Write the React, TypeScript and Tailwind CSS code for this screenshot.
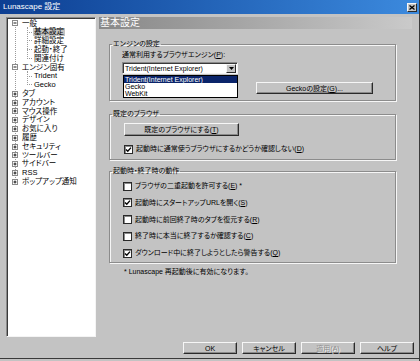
import React from "react";

type Node = { t: string; lvl: 0 | 1; box?: "minus" | "plus"; sel?: boolean };

const tree: Node[] = [
  { t: "一般", lvl: 0, box: "minus" },
  { t: "基本設定", lvl: 1, sel: true },
  { t: "詳細設定", lvl: 1 },
  { t: "起動・終了", lvl: 1 },
  { t: "関連付け", lvl: 1 },
  { t: "エンジン固有", lvl: 0, box: "minus" },
  { t: "Trident", lvl: 1 },
  { t: "Gecko", lvl: 1 },
  { t: "タブ", lvl: 0, box: "plus" },
  { t: "アカウント", lvl: 0, box: "plus" },
  { t: "マウス操作", lvl: 0, box: "plus" },
  { t: "デザイン", lvl: 0, box: "plus" },
  { t: "お気に入り", lvl: 0, box: "plus" },
  { t: "履歴", lvl: 0, box: "plus" },
  { t: "セキュリティ", lvl: 0, box: "plus" },
  { t: "ツールバー", lvl: 0, box: "plus" },
  { t: "サイドバー", lvl: 0, box: "plus" },
  { t: "RSS", lvl: 0, box: "plus" },
  { t: "ポップアップ通知", lvl: 0, box: "plus" },
];

function ExpBox({ kind }: { kind: "minus" | "plus" }) {
  return (
    <svg width="6" height="6" viewBox="0 0 6 6" className="shrink-0 relative">
      <rect x="0.5" y="0.5" width="5" height="5" fill="#fff" stroke="#8a8a8a" />
      <path d="M1.5 3 H4.5" stroke="#000" strokeWidth="0.9" />
      {kind === "plus" && <path d="M3 1.5 V4.5" stroke="#000" strokeWidth="0.9" />}
    </svg>
  );
}

function Check({ checked }: { checked?: boolean }) {
  return (
    <span className="w-[9px] h-[9px] shrink-0 bg-white border border-[#2a2a2a] shadow-[inset_1px_1px_0_#8a8a8a] flex items-center justify-center">
      {checked && (
        <svg width="7" height="7" viewBox="0 0 7 7">
          <path d="M1 3.4 L2.8 5.2 L6 1.6" stroke="#000" strokeWidth="1.4" fill="none" />
        </svg>
      )}
    </span>
  );
}

function Btn({ children, className, disabled }: { children: React.ReactNode; className?: string; disabled?: boolean }) {
  return (
    <div
      className={
        "flex items-center justify-center shrink-0 bg-[#c3c3c3] border border-t-[#f6f6f6] border-l-[#f6f6f6] border-r-[#2a2a2a] border-b-[#2a2a2a] shadow-[inset_-1px_-1px_0_#8a8a8a] text-[7px] leading-none " +
        (disabled ? "text-[#8e8e8e] [text-shadow:1px_1px_0_#f4f4f4] " : "text-black ") +
        (className ?? "")
      }
    >
      {children}
    </div>
  );
}

function Tree() {
  return (
    <div className="w-[90px] h-full shrink-0 bg-white border border-t-[#8a8a8a] border-l-[#8a8a8a] border-r-[#f4f4f4] border-b-[#f4f4f4] shadow-[inset_1px_1px_0_#3a3a3a]">
      <div className="relative pt-[1px] pl-[1px]">
        {/* root connector */}
        <div className="absolute left-[8px] top-[5.4px] h-[158.4px] border-l border-dotted border-[#9a9a9a]" />
        {/* children of 一般 */}
        <div className="absolute left-[20px] top-[9px] h-[31.6px] border-l border-dotted border-[#9a9a9a]" />
        {/* children of エンジン固有 */}
        <div className="absolute left-[20px] top-[53px] h-[13.6px] border-l border-dotted border-[#9a9a9a]" />
        {tree.map((n, i) => (
          <div key={i} className="h-[8.8px] flex items-center text-[7.5px] leading-none whitespace-nowrap relative">
            {n.lvl === 0 ? (
              <>
                <span className="ml-[4px]">
                  <ExpBox kind={n.box!} />
                </span>
                <span className="ml-[3px] w-[2px]" />
                <span className="ml-[-1px]">{n.t}</span>
              </>
            ) : (
              <>
                <span className="ml-[19px] w-[5px] border-t border-dotted border-[#9a9a9a]" />
                <span className={"ml-[1px] px-[1px] " + (n.sel ? "bg-[#c2c2c2]" : "")}>{n.t}</span>
              </>
            )}
          </div>
        ))}
      </div>
    </div>
  );
}

const fs =
  "ml-[10px] w-[287px] border border-[#8c8c8c] shadow-[1px_1px_0_#f6f6f6,inset_1px_1px_0_#f6f6f6] text-[7px] leading-[8px]";

function RightPane() {
  return (
    <div className="w-[313px] flex flex-col">
      <div className="h-[12px] shrink-0 bg-linear-to-r from-[#888888] to-[#cacaca] flex items-center pl-[1px]">
        <span className="text-white text-[10px] leading-none">基本設定</span>
      </div>

      <fieldset className={fs + " mt-[11px] pb-[6px]"}>
        <legend className="ml-[2px] px-[1px]">エンジンの設定</legend>
        <div className="ml-[12px] mt-[3px] h-[8px] whitespace-nowrap">
          通常利用するブラウザエンジン(<u>P</u>):
        </div>
        <div className="relative ml-[12px] mt-[3px] w-[116px] h-[12px] bg-white border border-t-[#8a8a8a] border-l-[#8a8a8a] border-r-[#f4f4f4] border-b-[#f4f4f4] shadow-[inset_1px_1px_0_#3a3a3a] flex items-center">
          <span className="pl-[2px] leading-none whitespace-nowrap">Trident(Internet Explorer)</span>
          <div className="ml-auto mr-[1px] w-[10px] h-[9px] bg-[#c3c3c3] border border-t-[#f6f6f6] border-l-[#f6f6f6] border-r-[#2a2a2a] border-b-[#2a2a2a] flex items-center justify-center">
            <svg width="5" height="3" viewBox="0 0 5 3">
              <path d="M0 0 H5 L2.5 3 Z" fill="#000" />
            </svg>
          </div>
          <div className="absolute left-[0px] top-[12px] w-[115px] h-[23px] bg-white border border-black leading-[7px] z-10">
            <div className="h-[7px] bg-[#0a246a] text-white px-[1px] whitespace-nowrap">Trident(Internet Explorer)</div>
            <div className="h-[7px] px-[1px]">Gecko</div>
            <div className="h-[7px] px-[1px]">WebKit</div>
          </div>
        </div>
        <div className="flex mt-[8px]">
          <Btn className="ml-[146px] w-[117px] h-[12px]">
            Geckoの設定(<u>G</u>)...
          </Btn>
        </div>
      </fieldset>

      <fieldset className={fs + " mt-[9px] pb-[5px]"}>
        <legend className="ml-[2px] px-[1px]">既定のブラウザ</legend>
        <div className="flex mt-[5px]">
          <Btn className="ml-[14px] w-[115px] h-[13px]">
            既定のブラウザにする(<u>T</u>)
          </Btn>
        </div>
        <div className="ml-[14px] mt-[8px] h-[10px] flex items-center gap-[3px] whitespace-nowrap">
          <Check checked />
          <span>
            起動時に通常使うブラウザにするかどうか確認しない(<u>D</u>)
          </span>
        </div>
      </fieldset>

      <fieldset className={fs + " mt-[7px] pb-[4px]"}>
        <legend className="ml-[2px] px-[1px]">起動時・終了時の動作</legend>
        <div className="ml-[13px] mt-[6px] flex flex-col gap-[6.75px]">
          {[
            { c: false, t: <>ブラウザの二重起動を許可する(<u>E</u>) *</> },
            { c: true, t: <>起動時にスタートアップURLを開く(<u>S</u>)</> },
            { c: false, t: <>起動時に前回終了時のタブを復元する(<u>R</u>)</> },
            { c: false, t: <>終了時に本当に終了するか確認する(<u>C</u>)</> },
            { c: true, t: <>ダウンロード中に終了しようとしたら警告する(<u>Q</u>)</> },
          ].map((r, i) => (
            <div key={i} className="h-[10px] flex items-center gap-[3px] whitespace-nowrap">
              <Check checked={r.c} />
              <span>{r.t}</span>
            </div>
          ))}
        </div>
      </fieldset>

      <div className="ml-[25px] mt-[5px] text-[7px] leading-[8px] whitespace-nowrap">
        * Lunascape 再起動後に有効になります。
      </div>
    </div>
  );
}

export default function App() {
  return (
    <div className="w-[420px] h-[361px] bg-[#c3c3c3] flex flex-col overflow-hidden text-black font-['Liberation_Sans','Noto_Sans_CJK_JP',sans-serif] [font-feature-settings:'palt'] border-r border-r-[#3a3a3a]">
      <div className="h-[14px] shrink-0 flex items-center bg-linear-to-r from-[#0d3e92] to-[#3c8ade] pl-[3px] pr-[2px]">
        <span className="text-white text-[8px] leading-none">Lunascape 設定</span>
        <div className="ml-auto w-[10px] h-[9px] bg-[#c3c3c3] border border-t-[#f6f6f6] border-l-[#f6f6f6] border-r-[#2a2a2a] border-b-[#2a2a2a] flex items-center justify-center">
          <svg width="6" height="5" viewBox="0 0 6 5">
            <path d="M0.5 0.5 L5.5 4.5 M5.5 0.5 L0.5 4.5" stroke="#000" strokeWidth="1.3" />
          </svg>
        </div>
      </div>

      <div className="flex mt-[3px] h-[320px] shrink-0 pl-[6px] gap-[3px]">
        <Tree />
        <RightPane />
      </div>

      <div className="flex justify-end gap-[5px] pr-[5px] mt-[5px] shrink-0">
        <Btn className="w-[54px] h-[12px]">OK</Btn>
        <Btn className="w-[54px] h-[12px]">キャンセル</Btn>
        <Btn className="w-[54px] h-[12px]" disabled>
          適用(A)
        </Btn>
        <Btn className="w-[54px] h-[12px]">ヘルプ</Btn>
      </div>
      <div className="mt-[4px] h-[1px] bg-[#3a3a3a] shrink-0" />
    </div>
  );
}
